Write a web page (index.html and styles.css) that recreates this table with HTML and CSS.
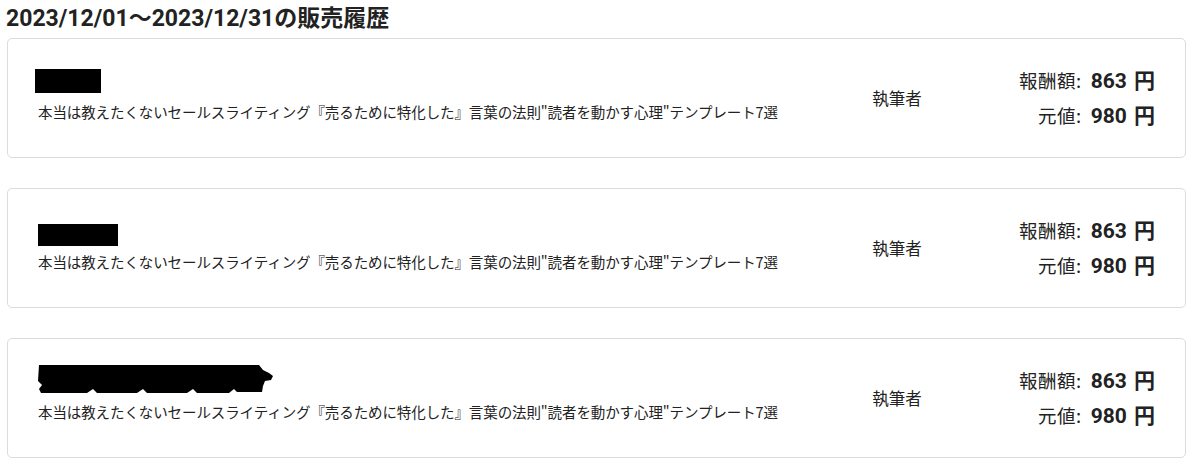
FILE: index.html
```html
<!DOCTYPE html>
<html lang="ja">
<head>
<meta charset="utf-8">
<link rel="stylesheet" href="styles.css">
</head>
<body>
<h1 class="heading">2023/12/01〜2023/12/31の販売履歴</h1>
<div class="list">
  <div class="card">
    <div class="info">
      <div class="name"><span class="redact redact-a"></span></div>
      <div class="title">本当は教えたくないセールスライティング『売るために特化した』言葉の法則"読者を動かす心理"テンプレート7選</div>
    </div>
    <div class="role">執筆者</div>
    <div class="amounts">
      <div class="row"><span class="label">報酬額:</span><span class="value">863 円</span></div>
      <div class="row"><span class="label">元値:</span><span class="value">980 円</span></div>
    </div>
  </div>
  <div class="card">
    <div class="info">
      <div class="name"><span class="redact redact-b"></span></div>
      <div class="title">本当は教えたくないセールスライティング『売るために特化した』言葉の法則"読者を動かす心理"テンプレート7選</div>
    </div>
    <div class="role">執筆者</div>
    <div class="amounts">
      <div class="row"><span class="label">報酬額:</span><span class="value">863 円</span></div>
      <div class="row"><span class="label">元値:</span><span class="value">980 円</span></div>
    </div>
  </div>
  <div class="card">
    <div class="info">
      <div class="name">
        <svg class="scribble" width="240" height="30" viewBox="0 0 240 30">
          <path d="M2 1 H222 L226 6 L232 9 L236 12 L234 16 L228 17 L226 22 L225 28 L200 28 L197 25 L192 29 L160 29 L156 25 L150 29 L110 29 L106 25 L100 29 L60 29 L56 25 L50 29 L4 29 L2 25 L5 21 L1 17 Z" fill="#000"/>
        </svg>
      </div>
      <div class="title">本当は教えたくないセールスライティング『売るために特化した』言葉の法則"読者を動かす心理"テンプレート7選</div>
    </div>
    <div class="role">執筆者</div>
    <div class="amounts">
      <div class="row"><span class="label">報酬額:</span><span class="value">863 円</span></div>
      <div class="row"><span class="label">元値:</span><span class="value">980 円</span></div>
    </div>
  </div>
</div>
</body>
</html>
```
FILE: styles.css
```css
html, body {
  margin: 0;
  padding: 0;
  background: #fff;
}
body {
  padding: 0 14px 0 7px;
  font-family: "Roboto", "Noto Sans CJK JP", sans-serif;
  color: #222;
}
.heading {
  margin: 0 0 0 -1px;
  padding-top: 5px;
  height: 32px;
  box-sizing: border-box;
  font-size: 23px;
  line-height: 28px;
  font-weight: 700;
  color: #222;
  white-space: nowrap;
}
.list {
  display: flex;
  flex-direction: column;
  gap: 30px;
  padding-top: 6px;
}
.card {
  height: 120px;
  box-sizing: border-box;
  border: 1px solid #dcdcdc;
  border-radius: 5px;
  display: flex;
  align-items: center;
  padding: 0 30px;
}
.info {
  flex: 1;
  align-self: stretch;
  display: flex;
  flex-direction: column;
  padding-top: 28px;
}
.name {
  height: 34px;
}
.redact {
  display: block;
  background: #000;
}
.redact-a {
  width: 66px;
  height: 24px;
  margin-top: 2px;
  margin-left: -3px;
}
.redact-b {
  width: 80px;
  height: 22px;
  margin-top: 7px;
}
.scribble {
  display: block;
  margin-top: -3px;
  margin-left: -1px;
}
.title {
  font-family: "Noto Sans CJK JP", sans-serif;
  font-size: 14.5px;
  line-height: 22px;
  color: #222;
  letter-spacing: -0.1px;
}
.role {
  width: 120px;
  text-align: center;
  font-family: "Noto Sans CJK JP", sans-serif;
  font-size: 16.5px;
  color: #222;
  margin-right: 62px;
}
.amounts {
  display: flex;
  flex-direction: column;
  align-items: flex-end;
  gap: 8px;
}
.row {
  display: flex;
  align-items: baseline;
  gap: 9px;
  line-height: 26px;
}
.label {
  font-family: "Noto Sans CJK JP", sans-serif;
  font-size: 18.5px;
  color: #222;
  letter-spacing: 0.5px;
}
.value {
  font-family: "Roboto", "Noto Sans CJK JP", sans-serif;
  font-weight: 700;
  font-size: 21px;
  color: #222;
  word-spacing: 2px;
}
```
